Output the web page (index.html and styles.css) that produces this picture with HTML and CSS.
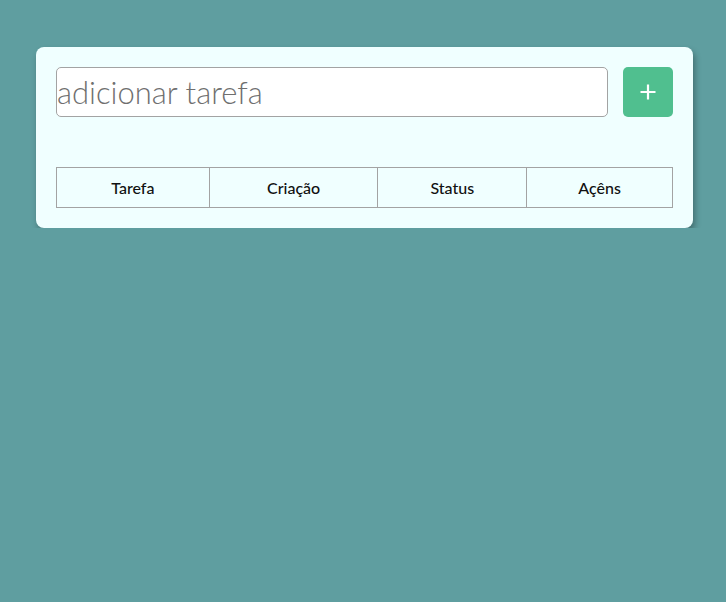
FILE: index.html
```html
<!DOCTYPE html>
<html lang="pt">
<head>
<meta charset="utf-8">
<title>Tarefas</title>
<link rel="stylesheet" href="styles.css">
</head>
<body>
<main class="card">
  <form class="add-row">
    <input class="task-input" type="text" placeholder="adicionar tarefa">
    <button class="add-btn" type="button" aria-label="Adicionar">
      <svg width="18" height="18" viewBox="0 0 18 18"><path d="M9 1.5v15M1.5 9h15" stroke="#fff" stroke-width="2.2" stroke-linecap="butt"/></svg>
    </button>
  </form>
  <table class="tasks">
    <thead>
      <tr>
        <th class="c1">Tarefa</th>
        <th class="c2">Criação</th>
        <th class="c3">Status</th>
        <th class="c4">Açêns</th>
      </tr>
    </thead>
    <tbody></tbody>
  </table>
</main>
</body>
</html>
```
FILE: styles.css
```css
* { box-sizing: border-box; }
body {
  margin: 0;
  background: #5f9ea0;
  font-family: "Lato", "Noto Sans", sans-serif;
  padding: 47px 33px 0 36px;
}
.card {
  background: #f0ffff;
  border-radius: 8px;
  padding: 20px;
  box-shadow: 2px 4px 6px rgba(0, 0, 0, 0.3);
  width: 657px;
}
.add-row {
  display: flex;
  gap: 15px;
  margin: 0 0 50px;
}
.task-input {
  flex: 1;
  height: 50px;
  border: 1px solid #a3a3a3;
  border-radius: 5px;
  background: #fff;
  padding: 0;
  font-family: inherit;
  font-size: 31px;
  font-weight: 300;
  color: #333;
}
.task-input::placeholder { color: #6f6f6f; }
.add-btn {
  width: 50px;
  height: 50px;
  border: none;
  border-radius: 5px;
  background: #50bf8f;
  display: flex;
  align-items: center;
  justify-content: center;
  padding: 0;
}
.tasks {
  width: 100%;
  border-collapse: collapse;
}
.tasks th {
  border: 1px solid #a3a3a3;
  height: 40px;
  font-weight: 500;
  font-size: 16px;
  color: #111;
  text-align: center;
  padding: 0;
}
.c1 { width: 153px; }
.c2 { width: 169px; }
.c3 { width: 149px; }
.c4 { width: 146px; }
```
